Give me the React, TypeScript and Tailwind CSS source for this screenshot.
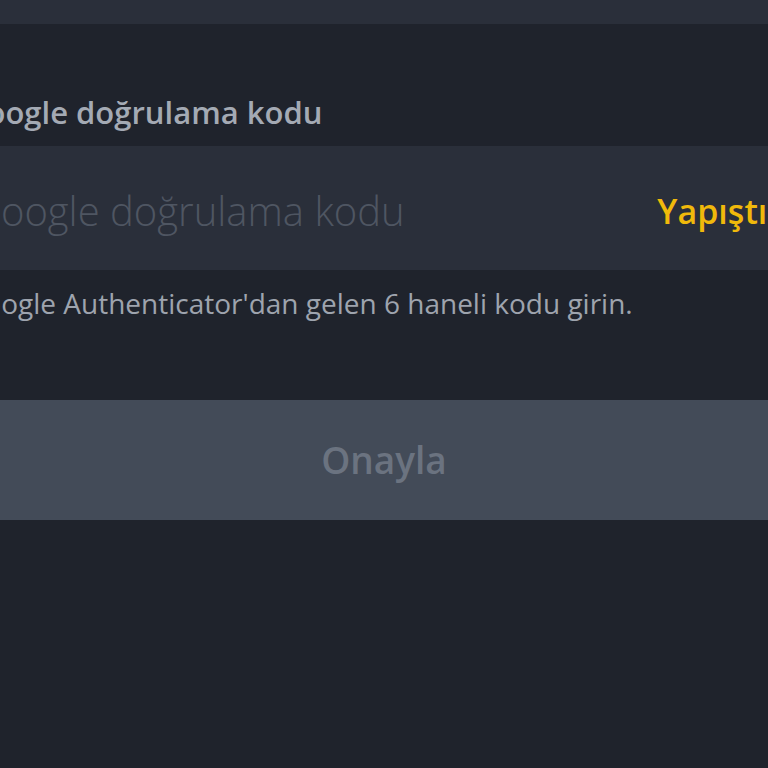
export default function App() {
  return (
    <div
      className="w-full h-[768px] overflow-hidden bg-[#1f232c]"
      style={{ fontFamily: '"Open Sans", Roboto, sans-serif' }}
    >
      {/* top sheet edge */}
      <div className="h-[24px] bg-[#2a2f3a]" />

      {/* wider inner column, cropped on both sides */}
      <div className="-ml-[80px] w-[928px] px-[44px] pt-[68px]">
        <label className="block text-[31px] leading-[40px] font-semibold text-[#a4aab4]">
          Google doğrulama kodu
        </label>

        <div className="mt-[14px] h-[124px] bg-[#2a2f3a] flex items-center justify-between pl-[8px] pt-[6px]">
          <span className="text-[40px] font-light text-[#4f5662]">Google doğrulama kodu</span>
          <span className="text-[34px] font-semibold text-[#f0b90b] mr-[22px]">Yapıştır</span>
        </div>

        <p className="mt-[15px] text-[28px] leading-[36px] text-[#9ea4ae]">
          Google Authenticator'dan gelen 6 haneli kodu girin.
        </p>
      </div>

      <div className="-ml-[80px] w-[928px] mt-[79px]">
        <button className="w-full h-[120px] bg-[#434b58] text-[37px] font-semibold text-[#6b7380]">
          Onayla
        </button>
      </div>
    </div>
  );
}
